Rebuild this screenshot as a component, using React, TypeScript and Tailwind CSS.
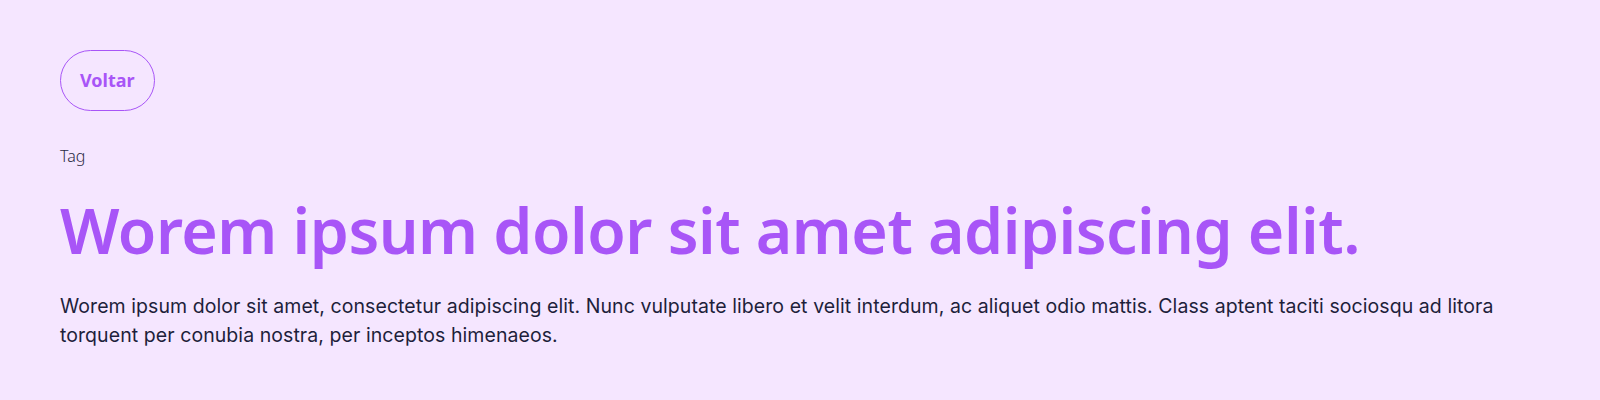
export default function App() {
  return (
    <div className="min-h-[400px] w-full bg-[#f5e6ff] px-[60px] pt-[50px] font-['Inter',sans-serif]">
      <button className="h-[61px] rounded-full border border-[#a855f7] px-[19px] font-['Noto_Sans',sans-serif] text-[18px] font-bold text-[#a855f7]">
        Voltar
      </button>
      <p className="mt-[33px] font-['Noto_Sans',sans-serif] text-[16px] font-light leading-6 text-[#2b2b45]">Tag</p>
      <h1 className="mt-[22px] font-['Noto_Sans',sans-serif] text-[62.5px] leading-[80px] font-semibold tracking-[-0.5px] text-[#a855f7]">
        Worem ipsum dolor sit amet adipiscing elit.
      </h1>
      <p className="mt-[22px] w-[1510px] text-[19.5px] leading-[29px] tracking-[0.07px] text-[#1e1f3b]">
        Worem ipsum dolor sit amet, consectetur adipiscing elit. Nunc vulputate libero et velit interdum, ac aliquet odio mattis. Class aptent taciti sociosqu ad litora torquent per conubia nostra, per inceptos himenaeos.
      </p>
    </div>
  );
}
